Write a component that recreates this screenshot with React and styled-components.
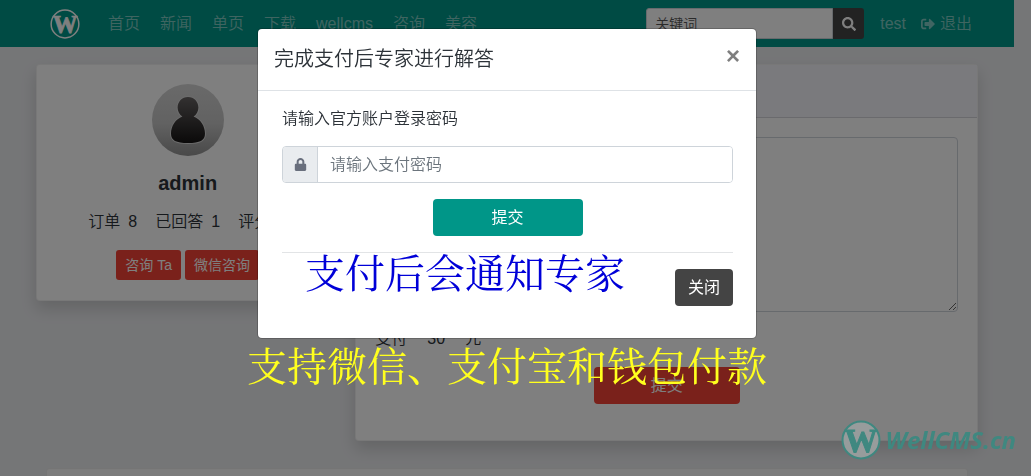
import React from "react"
import styled, { createGlobalStyle } from "styled-components"
import { FaLock, FaSearch, FaSignOutAlt } from "react-icons/fa"

const GlobalStyle = createGlobalStyle`
  :root {
    --teal: #009688;
    --red: #f44336;
    --dark: #444;
    --text: #2c3238;
    --border: #ced4da;
  }
  *, *::before, *::after {
    box-sizing: border-box;
  }
  body {
    margin: 0;
    overflow: hidden;
    background-color: #ebecef;
    color: var(--text);
    font-family: "Liberation Sans", Arial, "Noto Sans CJK SC", sans-serif;
    font-size: 16px;
    font-weight: 350;
    line-height: 24px;
  }
  button, input, textarea {
    font: inherit;
  }
  a {
    color: inherit;
    text-decoration: none;
  }
`

// The right padding stands in for the scrollbar while the modal is open
const Page = styled.div`
  height: 100vh;
  overflow: hidden;
  padding-right: 17px;
`

const Navbar = styled.header`
  display: flex;
  align-items: center;
  height: 47px;
  padding: 0 42px 0 50px;
  background-color: var(--teal);
  color: rgba(255, 255, 255, 0.5);
`

const Brand = styled.a`
  display: flex;
  margin-right: 28px;
`

const NavLinks = styled.nav`
  display: flex;
  flex: 1;
  gap: 20px;
`

const SearchForm = styled.form`
  display: flex;
  width: 218px;
  height: 31px;
  margin-right: 16px;
`

const SearchInput = styled.input`
  flex: 1;
  min-width: 0;
  padding: 0 8px;
  border: 1px solid var(--border);
  border-radius: 3px 0 0 3px;
  background-color: #fff;
  font-size: 14px;
  &::placeholder {
    color: #555;
    opacity: 1;
  }
`

const SearchButton = styled.button`
  display: flex;
  align-items: center;
  justify-content: center;
  width: 31px;
  padding: 0;
  border: 0;
  border-radius: 0 3px 3px 0;
  background-color: var(--dark);
  color: #fff;
  font-size: 14px;
`

const UserLinks = styled.nav`
  display: flex;
  gap: 15px;
  a {
    display: flex;
    align-items: center;
    gap: 5px;
  }
  svg {
    font-size: 14px;
  }
`

const Container = styled.main`
  padding: 17px 28px 0;
`

const Row = styled.div`
  display: flex;
  align-items: flex-start;
`

const Col = styled.div`
  width: calc(100% * ${({ span }) => span} / 12);
  padding: 0 8px;
`

const Card = styled.section`
  border: 1px solid rgba(0, 0, 0, 0.06);
  border-radius: 4px;
  background-color: #fff;
  box-shadow: 0 8px 16px rgba(0, 0, 0, 0.15);
`

const ProfileCard = styled(Card)`
  display: flex;
  flex-direction: column;
  align-items: center;
  padding: 19px 15px 20px;
`

const Name = styled.h1`
  margin: 15px 0;
  font-size: 20px;
  line-height: 24px;
`

const Stats = styled.div`
  display: flex;
  gap: 18px;
  margin-bottom: 16px;
  white-space: nowrap;
  span {
    margin-left: 8px;
  }
`

const ProfileActions = styled.div`
  display: flex;
  gap: 4px;
`

const Button = styled.button`
  height: ${({ small }) => (small ? "30px" : "37px")};
  width: ${({ width }) => width || "auto"};
  padding: ${({ small }) => (small ? "0 9px" : "0 13px")};
  border: 0;
  border-radius: ${({ small }) => (small ? "3px" : "4px")};
  background-color: ${({ color }) => `var(--${color})`};
  color: #fff;
  font-size: ${({ small }) => (small ? "14px" : "16px")};
  font-weight: 400;
  white-space: nowrap;
`

const CardHeader = styled.div`
  height: 53px;
  border-bottom: 1px solid rgba(0, 0, 0, 0.13);
  background-color: #f5f5fb;
`

const QuestionForm = styled.form`
  display: flex;
  flex-direction: column;
  align-items: center;
  padding: 19px 19px 36px;
`

const QuestionText = styled.textarea`
  display: block;
  width: 100%;
  height: 175px;
  padding: 6px 12px;
  border: 1px solid var(--border);
  border-radius: 4px;
  background-color: #fff;
  resize: vertical;
`

const Price = styled.div`
  display: flex;
  gap: 20px;
  align-self: flex-start;
  margin: 15px 0 16px;
`

const NextCard = styled(Card)`
  height: 120px;
  margin: 27px 18px 0;
  background-color: #f9f9f9;
  box-shadow: none;
`

const Backdrop = styled.div`
  position: fixed;
  inset: 0;
  display: flex;
  flex-direction: column;
  align-items: center;
  padding: 29px 17px 0 0;
  background-color: rgba(0, 0, 0, 0.5);
`

const Modal = styled.div`
  width: 100%;
  max-width: 498px;
  border-radius: 4px;
  background-color: #fff;
  box-shadow: 0 0 0 1px rgba(0, 0, 0, 0.2);
`

const ModalHeader = styled.div`
  display: flex;
  justify-content: space-between;
  align-items: flex-start;
  padding: 15px 16px;
  border-bottom: 1px solid #dee2e6;
`

const ModalTitle = styled.h2`
  margin: 0;
  font-size: 20px;
  font-weight: 350;
  line-height: 31px;
`

const CloseIcon = styled.button`
  padding: 0;
  border: 0;
  background: none;
  color: #7f7f7f;
  font-size: 24px;
  font-weight: 700;
  line-height: 24px;
`

const ModalBody = styled.form`
  padding: 16px 23px 32px 24px;
`

const PasswordLabel = styled.label`
  display: block;
  margin-bottom: 15px;
`

const InputGroup = styled.div`
  display: flex;
  height: 37px;
  margin-bottom: 16px;
  border: 1px solid var(--border);
  border-radius: 4px;
  overflow: hidden;
`

const Addon = styled.span`
  display: flex;
  align-items: center;
  justify-content: center;
  width: 35px;
  border-right: 1px solid var(--border);
  background-color: #e9ecef;
  color: #696f7d;
  font-size: 13px;
`

const PasswordInput = styled.input`
  flex: 1;
  min-width: 0;
  padding: 0 12px;
  border: 0;
  &::placeholder {
    color: #6c757d;
    opacity: 1;
  }
`

const SubmitRow = styled.div`
  display: flex;
  justify-content: center;
  padding-bottom: 16px;
  border-bottom: 1px solid #e2e4e6;
`

const ModalFooter = styled.div`
  display: flex;
  justify-content: space-between;
  align-items: flex-start;
  padding-left: 23px;
  button {
    margin-top: 16px;
  }
`

const Note = styled.p`
  margin: 0;
  color: ${({ color }) => color};
  font-family: "Noto Serif CJK SC", "Noto Sans CJK SC", serif;
  font-size: 40px;
  font-weight: 400;
  line-height: 36px;
  white-space: nowrap;
`

const PaymentNote = styled(Note)`
  margin-top: 8px;
`

const Watermark = styled.div`
  position: fixed;
  right: 15px;
  bottom: 16px;
  display: flex;
  align-items: center;
  gap: 4px;
  color: #3f8880;
  font-family: "Open Sans", sans-serif;
  font-size: 24px;
  font-style: italic;
  font-weight: 700;
  line-height: 30px;
`

const Logo = ({ size, color, fill }) => (
  <svg width={size} height={size} viewBox="0 0 40 40" aria-hidden="true">
    <circle cx="20" cy="20" r="18.500" fill={fill} stroke={color} strokeWidth="2" />
    <text
      x="20"
      y="32"
      textAnchor="middle"
      fontFamily="Liberation Serif, serif"
      fontSize="33"
      fontStyle="normal"
      fontWeight="700"
      fill={color}
      stroke={color}
      strokeWidth="1"
    >
      W
    </text>
  </svg>
)

const Avatar = () => (
  <svg width="72" height="72" viewBox="0 0 72 72" role="img" aria-label="admin">
    <defs>
      <linearGradient id="avatarBg" x1="0" y1="0" x2="0" y2="1">
        <stop offset="0" stopColor="#d4d4d4" />
        <stop offset="0.55" stopColor="#c4c4c4" />
        <stop offset="1" stopColor="#929292" />
      </linearGradient>
      <linearGradient id="avatarBody" gradientUnits="userSpaceOnUse" x1="0" y1="12" x2="0" y2="59">
        <stop offset="0" stopColor="#686464" />
        <stop offset="1" stopColor="#161414" />
      </linearGradient>
    </defs>
    <circle cx="36" cy="36" r="36" fill="url(#avatarBg)" />
    <path
      d="M36 13c-6 0-10.400 4.700-10.400 10.500 0 4 2 7.200 4.800 9.100C23.500 35 19 42.500 19 49.500 19 56.500 24 59 36 59s17-2.500 17-9.500c0-7-4.500-14.500-11.400-16.900 2.800-1.900 4.800-5.100 4.800-9.100C46.400 17.700 42 13 36 13z"
      fill="url(#avatarBody)"
      stroke="#d8d8d8"
      strokeWidth="2"
      paintOrder="stroke"
    />
  </svg>
)

const navItems = ["首页", "新闻", "单页", "下载", "wellcms", "咨询", "美容"]

const stats = [
  { label: "订单", value: 8 },
  { label: "已回答", value: 1 },
  { label: "评分", value: 5 },
]

const PaymentModal = () => (
  <Backdrop>
    <Modal role="dialog" aria-labelledby="modal-title">
      <ModalHeader>
        <ModalTitle id="modal-title">完成支付后专家进行解答</ModalTitle>
        <CloseIcon type="button" aria-label="关闭">×</CloseIcon>
      </ModalHeader>
      <ModalBody>
        <PasswordLabel htmlFor="password">请输入官方账户登录密码</PasswordLabel>
        <InputGroup>
          <Addon>
            <FaLock />
          </Addon>
          <PasswordInput id="password" type="password" placeholder="请输入支付密码" />
        </InputGroup>
        <SubmitRow>
          <Button type="button" color="teal" width="150px">提交</Button>
        </SubmitRow>
        <ModalFooter>
          <Note color="#0000d8">支付后会通知专家</Note>
          <Button type="button" color="dark">关闭</Button>
        </ModalFooter>
      </ModalBody>
    </Modal>
    <PaymentNote color="#ffff1e">支持微信、支付宝和钱包付款</PaymentNote>
  </Backdrop>
)

const App = () => {
  return (
    <>
      <GlobalStyle />
      <Page>
        <Navbar>
          <Brand href="#" aria-label="WellCMS">
            <Logo size={30} color="#fff" fill="none" />
          </Brand>
          <NavLinks>
            {navItems.map(item => (
              <a href="#" key={item}>{item}</a>
            ))}
          </NavLinks>
          <SearchForm>
            <SearchInput type="text" placeholder="关键词" aria-label="关键词" />
            <SearchButton type="button" aria-label="搜索">
              <FaSearch />
            </SearchButton>
          </SearchForm>
          <UserLinks>
            <a href="#">test</a>
            <a href="#">
              <FaSignOutAlt />退出
            </a>
          </UserLinks>
        </Navbar>
        <Container>
          <Row>
            <Col span={4}>
              <ProfileCard>
                <Avatar />
                <Name>admin</Name>
                <Stats>
                  {stats.map(({ label, value }) => (
                    <div key={label}>
                      {label}
                      <span>{value}</span>
                    </div>
                  ))}
                </Stats>
                <ProfileActions>
                  <Button type="button" color="red" small>咨询 Ta</Button>
                  <Button type="button" color="red" small>微信咨询</Button>
                </ProfileActions>
              </ProfileCard>
            </Col>
            <Col span={8}>
              <Card>
                <CardHeader />
                <QuestionForm>
                  <QuestionText aria-label="咨询" />
                  <Price>
                    <span>支付</span>
                    <span>30</span>
                    <span>元</span>
                  </Price>
                  <Button type="button" color="red" width="146px">提交</Button>
                </QuestionForm>
              </Card>
            </Col>
          </Row>
          <NextCard />
        </Container>
      </Page>
      <PaymentModal />
      <Watermark>
        <Logo size={40} color="#3f8880" fill="#979c9c" />
        WellCMS.cn
      </Watermark>
    </>
  )
}

export default App
